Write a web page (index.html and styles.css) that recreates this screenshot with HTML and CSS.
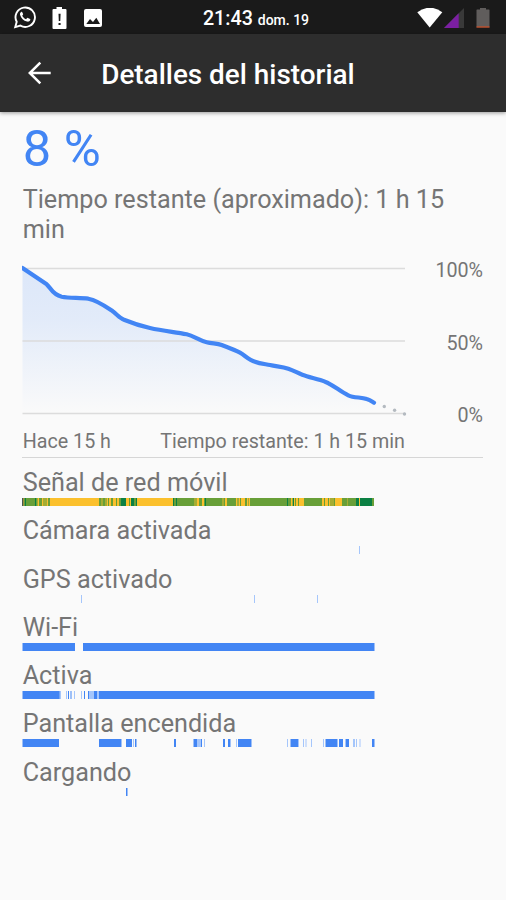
FILE: index.html
```
<!DOCTYPE html>
<html lang="es">
<head>
<meta charset="utf-8">
<title>Detalles del historial</title>
<link rel="stylesheet" href="styles.css">
</head>
<body>
<div class="status">
  <div class="status-left">
    <svg width="24" height="24" viewBox="0 0 24 24"><path d="M2.200 21.200l1.500-5.400a9.700 9.700 0 1 1 3.700 3.800z" fill="none" stroke="#fff" stroke-width="1.900"/><path d="M8.200 5.900c-1 .5-1.500 1.700-1.100 3 1 3.200 3.500 5.700 6.900 6.700 1.400.4 2.700-.2 3.200-1.300.3-.7.200-1.100-.1-1.300l-2.200-1.100c-.4-.2-.7 0-1 .4l-.8 1c-1.800-.7-3.100-1.900-3.900-3.500l.8-1.100c.2-.3.100-.6 0-.9l-.9-1.900c-.2-.4-.5-.3-.9 0z" fill="#fff"/></svg>
    <svg width="15" height="23" viewBox="0 0 15 23"><path d="M4.500 0h5.500v2h3.500q1 0 1 1v18q0 1-1 1h-12q-1 0-1-1v-18q0-1 1-1h3z" fill="#fff"/><path d="M6.500 6.800h2.100l-.3 7.200h-1.500zM6.500 16h2.100v2h-2.100z" fill="#1a1a1a"/></svg>
    <svg width="18" height="18" viewBox="0 0 18 18"><rect width="18" height="18" rx="2" fill="#fff"/><path d="M2.300 15l3.700-5 3 3 3.300-4.200 3.700 6.200z" fill="#1a1a1a"/></svg>
  </div>
  <div class="clock">21:43 <span class="date">dom. 19</span></div>
  <div class="status-right">
    <svg width="26" height="20" viewBox="0 0 26 20"><path d="M.3 4.200q12.700-9 25 0l-12.600 15.300z" fill="#fff"/></svg>
    <svg width="20" height="20" viewBox="0 0 20 20"><path d="M0 20L20 0v20z" fill="#393939"/><path d="M0 20L14.700 5.300v14.700z" fill="#7b1fa2"/></svg>
    <svg width="14" height="20" viewBox="0 0 14 20"><path d="M4 0h6v1.500h3q.5 0 .5.500v17.500h-13v-17.500q0-.5.500-.5h3z" fill="#605d5c"/><path d="M.5 18.500h13v1h-13z" fill="#e64a19"/></svg>
  </div>
</div>
<header class="appbar">
  <svg class="back" width="24" height="24" viewBox="0 0 24 24"><path d="M22.700 12H2M12.300 1.600L1.800 12l10.500 10.400" fill="none" stroke="#fff" stroke-width="2.500"/></svg>
  <h1>Detalles del historial</h1>
</header>
<main>
  <div class="level">8 %</div>
  <p class="remaining">Tiempo restante (aproximado): 1 h 15 min</p>
  <section class="chart">
    <svg width="387" height="160" viewBox="22 260 387 160">
      <defs><linearGradient id="fade" gradientUnits="userSpaceOnUse" x1="0" y1="268" x2="0" y2="413"><stop offset="0" stop-color="#4285f4" stop-opacity=".16"/><stop offset=".35" stop-color="#4285f4" stop-opacity=".13"/><stop offset="1" stop-color="#4285f4" stop-opacity="0"/></linearGradient></defs>
      <path class="area" d="M22.500 268L46.700 284.300C51 288 52 294.500 61.700 296.700C70 298.200 80 297.500 88.300 298.700C98 300.500 105 306 113.300 311.700C118 315.500 120 318.500 124 319.700C132 323 141 326 150 328C163 331 175 332 186.700 334.300C194 336 199 340.500 206.700 342.300C212 343.700 217 343.300 221.700 345C228 347.500 234 349.500 240 352.700C245 355.500 249 360 255 361.700C260 363.700 265 364 270 365C276 366.500 282 366.500 288.300 368.700C295 371 300 374.500 306.700 376.300C313 378.300 319 379 325 381.700C333 384.500 340 391.500 348.300 395.300C354 398 361 397 366.700 399C370 400 372 401.500 374 402.700V413H22.500z"/>
      <path class="grid" d="M22.500 268.500H405M22.500 341H405M22.500 413.500H405"/>
      <path class="curve" d="M22.500 268L46.700 284.300C51 288 52 294.500 61.700 296.700C70 298.200 80 297.500 88.300 298.700C98 300.500 105 306 113.300 311.700C118 315.500 120 318.500 124 319.700C132 323 141 326 150 328C163 331 175 332 186.700 334.300C194 336 199 340.500 206.700 342.300C212 343.700 217 343.300 221.700 345C228 347.500 234 349.500 240 352.700C245 355.500 249 360 255 361.700C260 363.700 265 364 270 365C276 366.500 282 366.500 288.300 368.700C295 371 300 374.500 306.700 376.300C313 378.300 319 379 325 381.700C333 384.500 340 391.500 348.300 395.300C354 398 361 397 366.700 399C370 400 372 401.500 374 402.700"/>
      <g fill="#b4bac0"><circle cx="384.300" cy="406.500" r="1.700"/><circle cx="394.600" cy="410.300" r="1.700"/><circle cx="404.500" cy="414" r="1.700"/></g>
    </svg>
    <div class="scale"><span>100%</span><span>50%</span><span>0%</span></div>
  </section>
  <div class="times"><span>Hace 15 h</span><span>Tiempo restante: 1 h 15 min</span></div>
  <section class="usage">
    <div class="row"><span>Señal de red móvil</span>
      <svg class="bar" viewBox="22 0 461 8" preserveAspectRatio="none">
        <path stroke="#fbc02d" d="M23 4H374"/>
        <path stroke="#689f38" d="M24 4H37M39 4H42M48 4H50M99 4H101M103 4H105M108 4H109M111 4H113M116 4H117M119 4H121M129 4H130M134 4H137M174 4H194M199 4H202M204 4H222M224 4H225M227 4H236M240 4H241M245 4H247M250 4H291M295 4H296M298 4H299M304 4H322M324 4H325M328 4H329M334 4H335M342 4H356M372 4H374"/>
        <path stroke="#a5ad33" d="M37 4H38M43 4H47M101 4H103M105 4H107M194 4H197M222 4H224M237 4H239M248 4H249M292 4H294M330 4H334M347 4H348"/>
        <path stroke="#0b8043" d="M25 4H26M35 4H36M121 4H126M131 4H134M136 4H137M173 4H174M176 4H177M205 4H206M287 4H288M293 4H294M356 4H359M360 4H372"/>
        <path stroke="#455a50" d="M22 4H23.500"/>
      </svg></div>
    <div class="row"><span>Cámara activada</span>
      <svg class="bar" viewBox="22 0 461 8" preserveAspectRatio="none"><path stroke="#a5c6fb" d="M359 4H360"/></svg></div>
    <div class="row"><span>GPS activado</span>
      <svg class="bar" viewBox="22 0 461 8" preserveAspectRatio="none"><path stroke="#a5c6fb" d="M81 4H82M254 4H255M317 4H318"/></svg></div>
    <div class="row"><span>Wi-Fi</span>
      <svg class="bar" viewBox="22 0 461 8" preserveAspectRatio="none"><path stroke="#4285f4" d="M22.500 4H75M83 4H374.500"/></svg></div>
    <div class="row"><span>Activa</span>
      <svg class="bar" viewBox="22 0 461 8" preserveAspectRatio="none"><path stroke="#a5c6fb" d="M59 4H61M66 4H67M74 4H75M81 4H82M89 4H94M97 4H99"/><path stroke="#4285f4" d="M22.500 4H59.500M68 4H69M70.500 4H71.500M84 4H85M88 4H89M94 4H97M99 4H374.500"/></svg></div>
    <div class="row"><span>Pantalla encendida</span>
      <svg class="bar" viewBox="22 0 461 8" preserveAspectRatio="none"><path stroke="#a5c6fb" d="M133 4H134M197 4H202M204 4H205M236 4H237M287 4H288M298 4H299M303 4H304M305.500 4H306.500M311 4H312M323 4H324M345 4H346M353 4H355M356 4H357M359.500 4H360.500"/><path stroke="#4285f4" d="M22.500 4H59M99 4H121.500M126 4H132M135 4H136.500M174 4H176M193.500 4H197M201 4H202M223 4H225M228 4H230.500M238 4H251.500M290.500 4H298M325.500 4H337.500M339 4H343M346 4H349M372 4H374.500"/></svg></div>
    <div class="row"><span>Cargando</span>
      <svg class="bar" viewBox="22 0 461 8" preserveAspectRatio="none"><path stroke="#4285f4" d="M126 4H127.500"/></svg></div>
  </section>
</main>
</body>
</html>
```
FILE: styles.css
```
* { box-sizing: border-box; }
body {
  margin: 0;
  min-height: 900px;
  background: #fafafa;
  color: #757575;
  font-family: Roboto, sans-serif;
}
svg { display: block; flex: none; }
.status {
  display: grid;
  grid-template-columns: 1fr auto 1fr;
  align-items: center;
  height: 34px;
  padding: 0 16px 0 13px;
  background: #1a1a1a;
  color: #fff;
}
.status-left, .status-right { display: flex; align-items: center; height: 34px; }
.status-left { gap: 15px; }
.status-left svg:last-child { margin-left: 2px; }
.status-right { justify-content: flex-end; }
.status-right svg:nth-child(2) { margin: 0 12px 0 1px; }
.clock { padding: 3px 0 0 9px; font-size: 19.7px; font-weight: 500; line-height: 31px; }
.date { font-size: 14px; }
.appbar {
  display: flex;
  align-items: center;
  height: 78px;
  padding-left: 28px;
  background: #2d2d2d;
  color: #fff;
  box-shadow: 0 1px 4px rgba(0, 0, 0, .4);
}
.appbar h1 { margin: 2px 0 0 49.2px; font-size: 27.9px; font-weight: 500; }
main { padding: 7px 23px 0 22px; }
.level { height: 66px; padding-left: .7px; font-size: 50.6px; line-height: 60px; color: #4285f4; }
.remaining { margin: 0 0 16px; padding-left: .7px; font-size: 25.2px; line-height: 29.6px; }
.chart { display: flex; justify-content: space-between; height: 160px; }
.scale {
  display: flex;
  flex-direction: column;
  justify-content: space-between;
  height: 168px;
  margin-top: -1px;
  text-align: right;
  font-size: 19.7px;
  line-height: 23px;
}
.grid { stroke: #dcdcdc; stroke-width: 1.4; }
.area { fill: url(#fade); }
.curve { fill: none; stroke: #4285f4; stroke-width: 4.2; stroke-linecap: round; stroke-linejoin: round; }
.times {
  display: flex;
  justify-content: space-between;
  height: 38px;
  padding: 10px 78px 0 .7px;
  border-bottom: 1px solid #d6d6d6;
  font-size: 19.7px;
  line-height: 23px;
}
.usage { padding-top: 9px; }
.row { height: 48.25px; font-size: 25.2px; line-height: 31px; }
.row span { display: block; height: 31px; padding-left: .7px; }
.bar { width: 461px; height: 8px; }
.bar path { stroke-width: 8; }
```
